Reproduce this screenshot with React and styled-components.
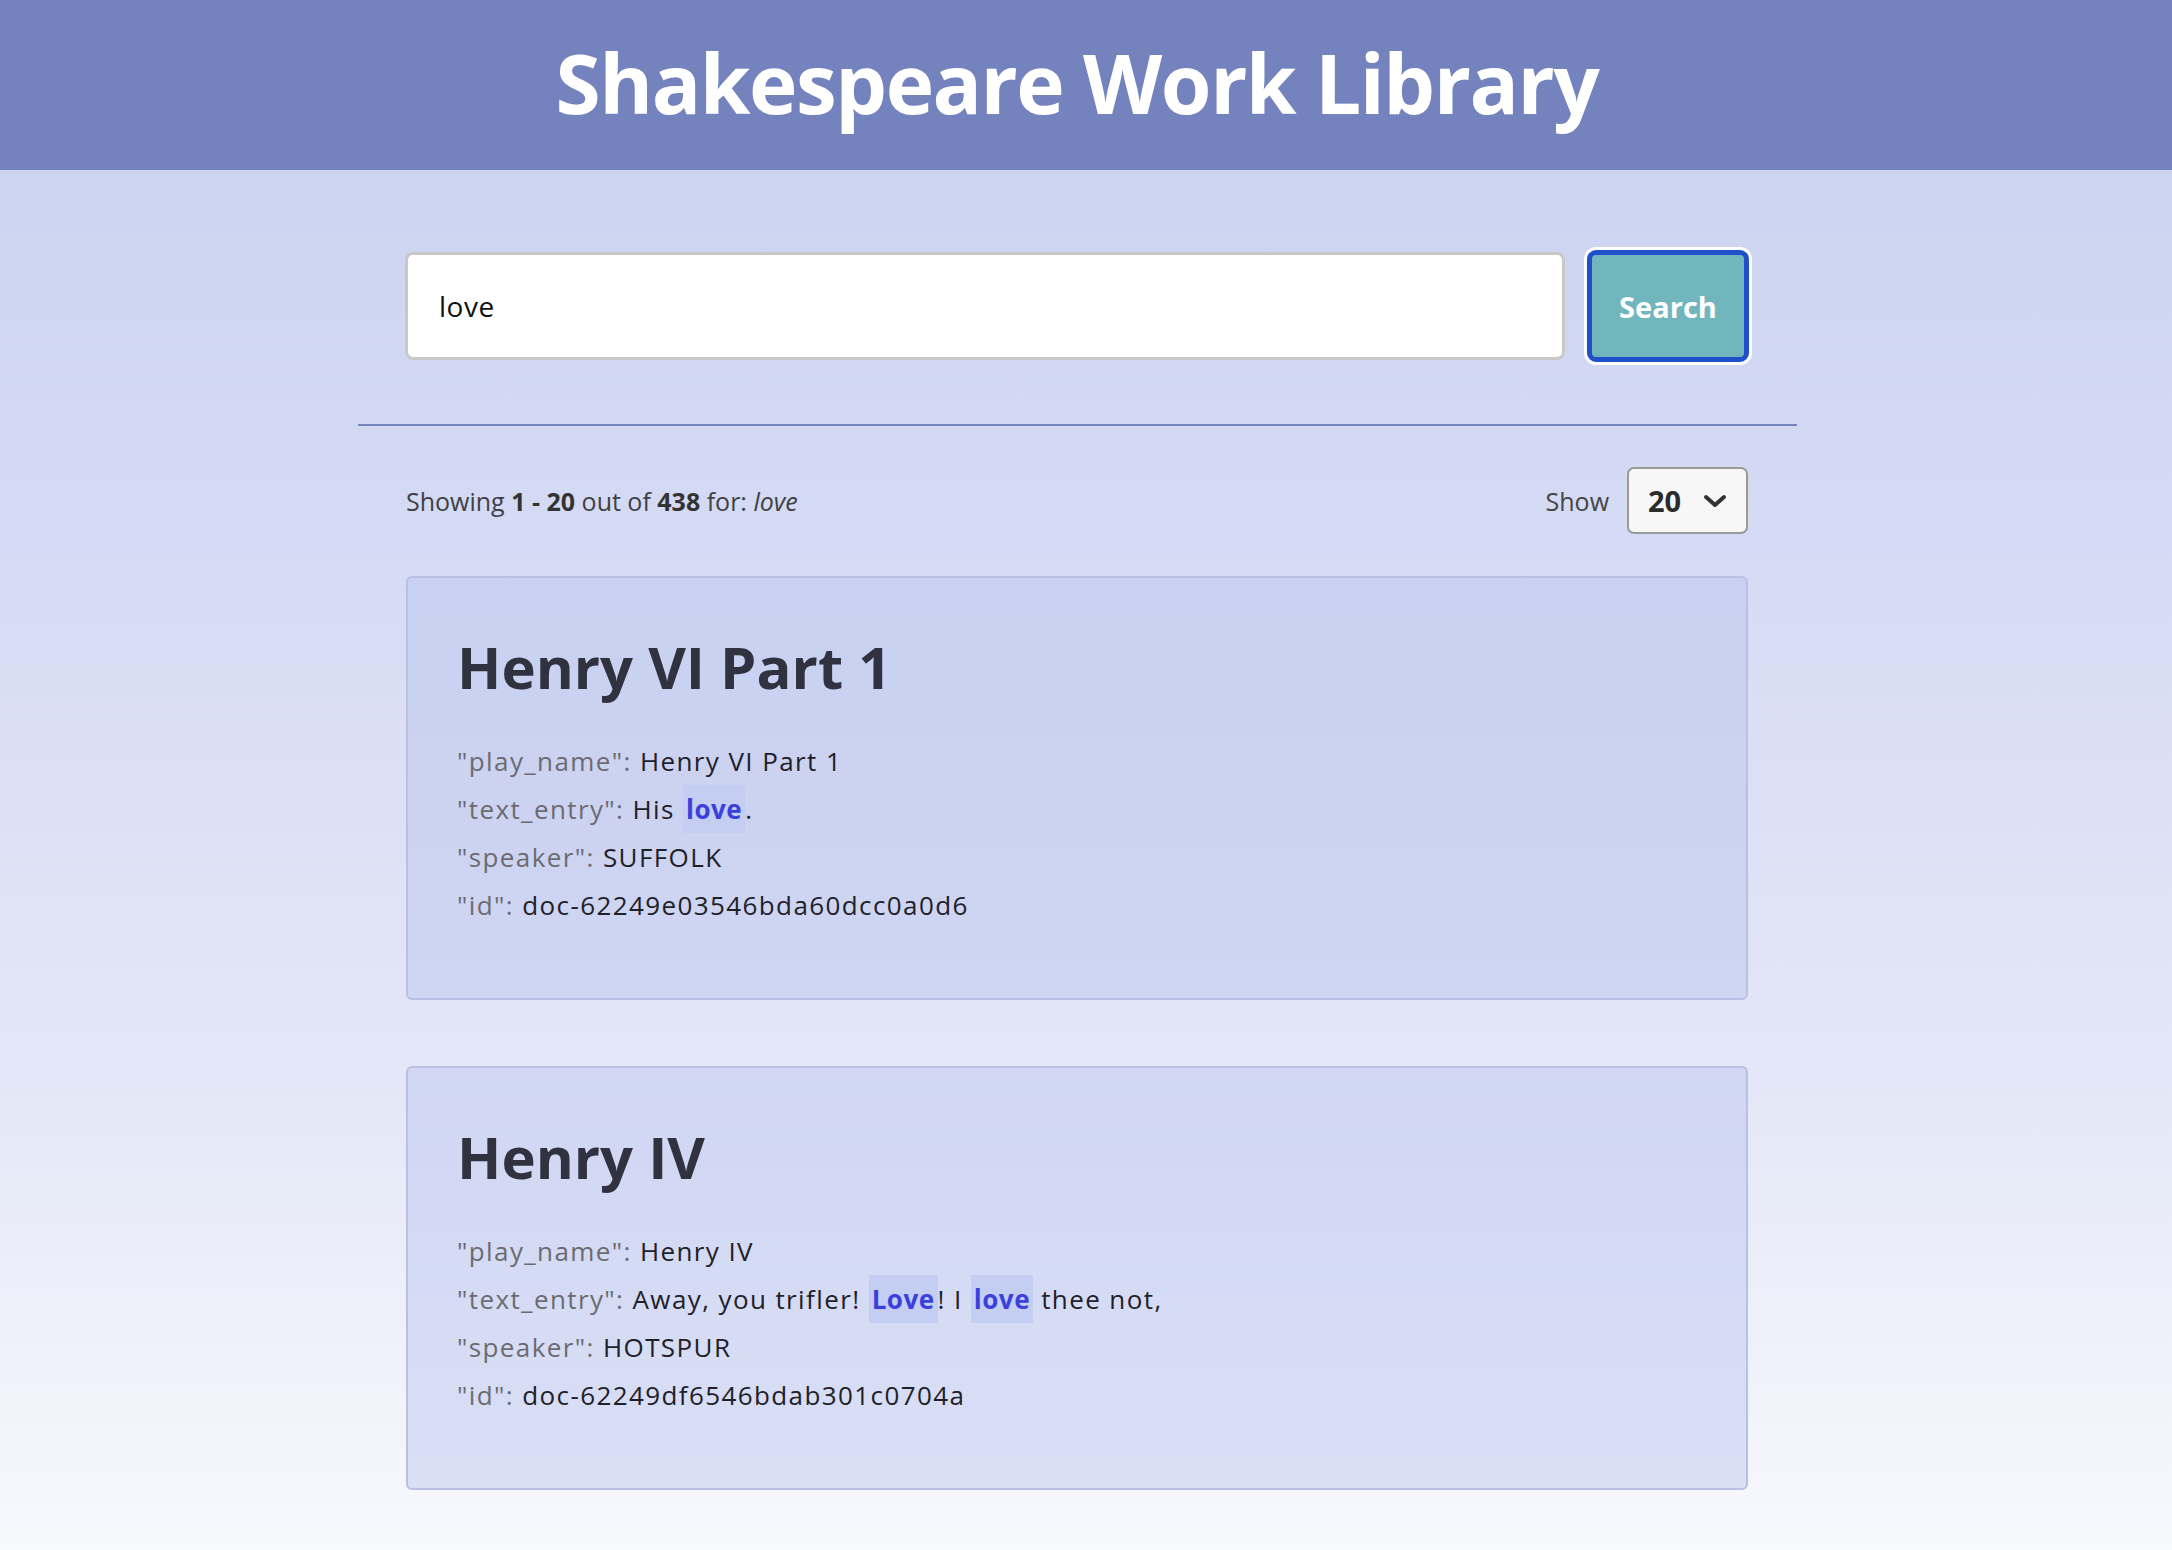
import styled, { createGlobalStyle } from "styled-components"

const GlobalStyle = createGlobalStyle`
  html, body {
    margin: 0;
    padding: 0;
  }
  body {
    font-family: "Open Sans", "Liberation Sans", sans-serif;
    color: #222;
  }
  * { box-sizing: border-box; }
`

const results = [
  {
    play_name: "Henry VI Part 1",
    text_entry: [["His "], ["love", true], ["."]],
    speaker: "SUFFOLK",
    id: "doc-62249e03546bda60dcc0a0d6",
  },
  {
    play_name: "Henry IV",
    text_entry: [["Away, you trifler! "], ["Love", true], ["! I "], ["love", true], [" thee not,"]],
    speaker: "HOTSPUR",
    id: "doc-62249df6546bdab301c0704a",
  },
]

const Chevron = () => (
  <svg width="24" height="14" viewBox="0 0 24 14">
    <polyline points="3,3 12,11 21,3" fill="none" stroke="#333" strokeWidth="4" strokeLinecap="round" strokeLinejoin="round" />
  </svg>
)

export default function App() {
  return (
    <Page>
      <GlobalStyle />
      <Header>
        <h1>Shakespeare Work Library</h1>
      </Header>
      <Main>
        <SearchRow>
          <SearchInput defaultValue="love" />
          <SearchButton>Search</SearchButton>
        </SearchRow>
        <Divider />
        <ResultsBar>
          <Summary>
            Showing <b>1 - 20</b> out of <b>438</b> for: <i>love</i>
          </Summary>
          <ShowPicker>
            <span>Show</span>
            <Select>
              <b>20</b>
              <Chevron />
            </Select>
          </ShowPicker>
        </ResultsBar>
        <CardList>
          {results.map((r) => (
            <Card key={r.id}>
              <h2>{r.play_name}</h2>
              <Field>
                <Key>"play_name":</Key> {r.play_name}
              </Field>
              <Field>
                <Key>"text_entry":</Key>{" "}
                {r.text_entry.map(([t, hit], i) =>
                  hit ? <Hit key={i}>{t}</Hit> : <span key={i}>{t}</span>
                )}
              </Field>
              <Field>
                <Key>"speaker":</Key> {r.speaker}
              </Field>
              <Field>
                <Key>"id":</Key> {r.id}
              </Field>
            </Card>
          ))}
        </CardList>
      </Main>
    </Page>
  )
}

const Page = styled.div`
  min-height: 100vh;
  background: linear-gradient(180deg, #c9d1f0 0%, #d5dbf4 35%, #e4e7f7 70%, #f8f9fd 100%);
`

const Header = styled.header`
  height: 170px;
  background: #7483be;
  display: flex;
  align-items: center;
  justify-content: center;
  padding-right: 18px;
  h1 {
    margin: 0;
    color: #fff;
    font-size: 82px;
    font-weight: 700;
    letter-spacing: -1.5px;
    line-height: 1;
    padding-bottom: 6px;
  }
`

const Main = styled.main`
  display: flex;
  flex-direction: column;
  align-items: center;
  padding: 80px 18px 40px 0;
`

const SearchRow = styled.div`
  width: 1344px;
  display: flex;
  align-items: center;
  gap: 22px;
`

const SearchInput = styled.input`
  flex: 1;
  height: 108px;
  border: 3px solid #c8c8c8;
  border-radius: 8px;
  background: #fff;
  padding: 0 31px;
  font-family: "Open Sans", sans-serif;
  font-size: 28px;
  letter-spacing: 0.5px;
  color: #111;
  outline: none;
`

const SearchButton = styled.button`
  width: 162px;
  height: 112px;
  border: 5px solid #1f4fc9;
  border-radius: 9px;
  box-shadow: 0 0 0 3px #fff;
  background: #72b6bd;
  color: #fff;
  font-family: "Open Sans", sans-serif;
  font-size: 29px;
  font-weight: 700;
  cursor: pointer;
`

const Divider = styled.hr`
  width: 1439px;
  margin: 62px 0 0;
  border: 0;
  border-top: 2px solid #7985c1;
`

const ResultsBar = styled.div`
  width: 1342px;
  margin-top: 41px;
  display: flex;
  justify-content: space-between;
  align-items: center;
`

const Summary = styled.div`
  font-size: 25px;
  color: #404146;
  b { font-weight: 700; color: #333; }
  i { font-style: italic; }
`

const ShowPicker = styled.div`
  display: flex;
  align-items: center;
  gap: 18px;
  font-size: 25px;
  color: #444;
`

const Select = styled.div`
  width: 121px;
  height: 67px;
  border: 2px solid #9a9a9a;
  border-radius: 7px;
  background: #f7f7f7;
  display: flex;
  align-items: center;
  justify-content: space-between;
  padding: 0 19px 0 19px;
  b {
    font-size: 29px;
    font-weight: 700;
    color: #2b2b2b;
  }
`

const CardList = styled.div`
  margin-top: 42px;
  display: flex;
  flex-direction: column;
  gap: 66px;
`

const Card = styled.section`
  width: 1342px;
  border: 2px solid #b9c0e4;
  border-radius: 6px;
  background: rgba(185, 196, 237, 0.45);
  padding: 54px 48px 69px 49px;
  h2 {
    margin: 0 0 35px;
    font-size: 58px;
    line-height: 70px;
    font-weight: 700;
    color: #30333f;
  }
`

const Field = styled.div`
  font-size: 26px;
  line-height: 48px;
  letter-spacing: 1.4px;
  color: #1f2128;
`

const Key = styled.span`
  color: #6b6b70;
`

const Hit = styled.mark`
  background: #c3cef2;
  color: #3b3fdd;
  font-weight: 700;
  letter-spacing: 0.5px;
  padding: 6px 3px;
`
